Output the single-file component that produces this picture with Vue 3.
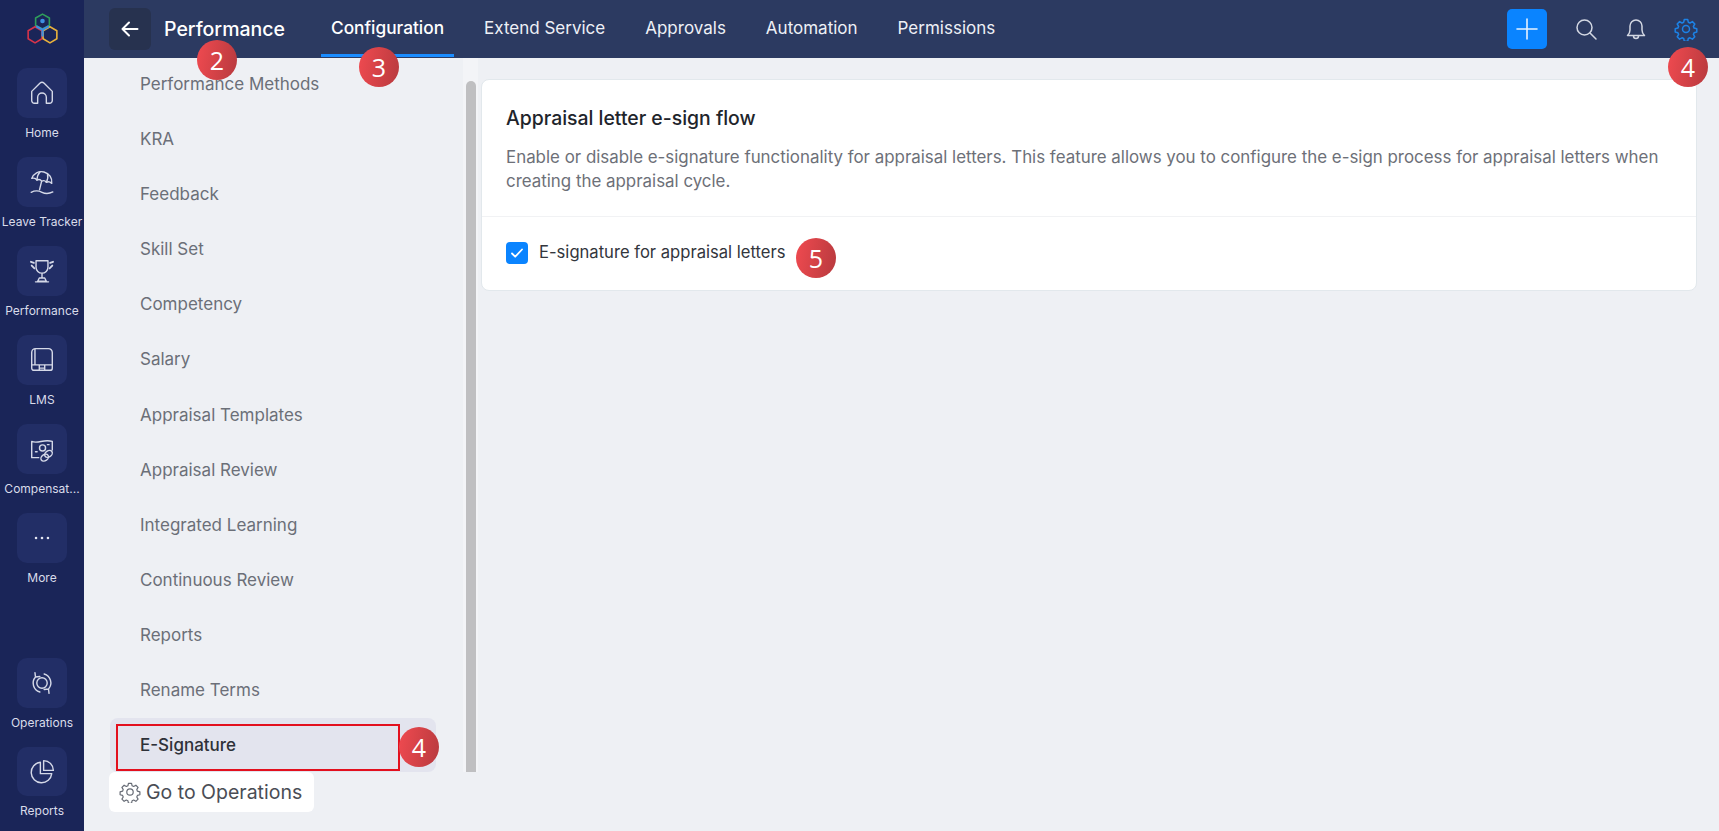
<script setup>
const railTop = [
  { label: 'Home', icon: 'home' },
  { label: 'Leave Tracker', icon: 'leave' },
  { label: 'Performance', icon: 'trophy' },
  { label: 'LMS', icon: 'lms' },
  { label: 'Compensat...', icon: 'comp' },
  { label: 'More', icon: 'more' },
]
const railBottom = [
  { label: 'Operations', icon: 'ops' },
  { label: 'Reports', icon: 'reports' },
]
const tabs = ['Configuration', 'Extend Service', 'Approvals', 'Automation', 'Permissions']
const menu = ['Performance Methods', 'KRA', 'Feedback', 'Skill Set', 'Competency', 'Salary', 'Appraisal Templates', 'Appraisal Review', 'Integrated Learning', 'Continuous Review', 'Reports', 'Rename Terms']
const gear = 'M10.300 2.500h3.400l.6 2.700 1.700.8 2.400-1.400 2.400 2.400-1.400 2.400.7 1.700 2.700.7v3.200l-2.700.7-.7 1.700 1.400 2.400-2.400 2.400-2.400-1.400-1.700.7-.6 2.800h-3.400l-.6-2.800-1.700-.7-2.400 1.400-2.400-2.400 1.400-2.400-.7-1.700-2.700-.7v-3.200l2.700-.7.7-1.700-1.400-2.400 2.400-2.400 2.400 1.400 1.700-.8z'
</script>

<template>
  <div class="page">
    <aside class="rail">
      <div class="logo">
        <svg width="31" height="31" viewBox="2.500 1 27 27" fill="none" stroke-width="1.400" stroke-linejoin="round">
          <path d="M16 2l6 3.400v6.400L16 15l-6-3.200V5.400z" stroke="#2f9e5b" />
          <path d="M9.500 13l6 3.400v7L9.500 27l-6-3.600v-7z" stroke="#d8344a" />
          <path d="M22.500 13l6 3.400v7l-6 3.600-6-3.600v-7z" stroke="#e9b23c" />
          <circle cx="16" cy="8" r="2" fill="#3d8fe0" stroke="none" />
          <path d="M10.500 12.500l5.500 3 5.500-3M16 15.500v6" stroke="#3d8fe0" stroke-width="2" />
        </svg>
      </div>
      <div v-for="item in railTop" :key="item.label" class="rail-item">
        <div class="rail-btn">
          <svg width="26" height="26" viewBox="0 0 24 24" fill="none" stroke="#d5d9e8" stroke-width="1.300" stroke-linecap="round" stroke-linejoin="round">
            <template v-if="item.icon === 'home'">
              <path d="M2.500 10.500L10 3a3 3 0 0 1 4 0l7.500 7.500V19a2.500 2.500 0 0 1-2.500 2.500h-3V16a4 4 0 0 0-8 0v5.500H5A2.500 2.500 0 0 1 2.500 19z" />
            </template>
            <template v-else-if="item.icon === 'leave'">
              <g transform="rotate(14 12 10)">
                <path d="M2.500 11C3 6 7 2.500 12 2.500S21 6 21.500 11c-1.800-1-3.700-1-5 .3-1.400-1.300-3.100-1.300-4.500 0-1.400-1.300-3.100-1.300-4.500 0-1.300-1.300-3.200-1.300-5-.3z" />
                <path d="M8.500 3.200C7.200 5.500 7 8.500 7.500 11.300M15.500 3.200c1.300 2.300 1.500 5.300 1 8.100M12 11.300v8" />
              </g>
              <path d="M2 21.500c3.500-1.800 6.500-1.800 10 0s6.500 1.500 10-.3" />
            </template>
            <template v-else-if="item.icon === 'trophy'">
              <path d="M6.500 2.500h11V8.500a5.500 5.500 0 0 1-11 0zM12 14v4.500M9.500 18.500h5l1.500 3H8zM6 22h12" />
              <path d="M1.800 3.500l2.700 1M2.500 7l2.500 2.500M22.200 3.500l-2.700 1M21.500 7L19 9.500" stroke-width="1.700" />
            </template>
            <template v-else-if="item.icon === 'lms'">
              <path d="M6 1.500h12A3.500 3.500 0 0 1 21.500 5v14.500a2 2 0 0 1-2 2H4.500a2 2 0 0 1-2-2V5A3.500 3.500 0 0 1 6 1.500zM2.500 16.500h19M5.500 2v14.500M9.500 16.500v5M14.500 16.500v5M9.500 19.500h5" />
            </template>
            <template v-else-if="item.icon === 'comp'">
              <path d="M9 20H2.500V5c6 2.500 11-2.500 19 0v8" />
              <path d="M6 14.500h1.500M17 8h1.500" />
              <circle cx="12.500" cy="11" r="2.800" />
              <ellipse cx="18" cy="16.500" rx="3.800" ry="2.800" transform="rotate(-35 18 16.500)" />
              <ellipse cx="14.500" cy="20" rx="3.800" ry="2.800" transform="rotate(-35 14.500 20)" />
            </template>
            <template v-else>
              <circle cx="6.500" cy="12" r="1.200" fill="#e4e7f2" stroke="none" />
              <circle cx="12" cy="12" r="1.200" fill="#e4e7f2" stroke="none" />
              <circle cx="17.500" cy="12" r="1.200" fill="#e4e7f2" stroke="none" />
            </template>
          </svg>
        </div>
        <div class="rail-label">{{ item.label }}</div>
      </div>
      <div class="rail-bottom">
        <div v-for="item in railBottom" :key="item.label" class="rail-item">
          <div class="rail-btn">
            <svg width="26" height="26" viewBox="0 0 24 24" fill="none" stroke="#d5d9e8" stroke-width="1.300" stroke-linecap="round" stroke-linejoin="round">
              <template v-if="item.icon === 'ops'">
                <circle cx="12" cy="12" r="4.800" />
                <path d="M6 6.500A8.500 8.500 0 0 0 10 20.300M5.500 2.500L6 6.500l4-.5" />
                <path d="M18 17.500A8.500 8.500 0 0 0 14 3.700M18.500 21.500L18 17.500l-4 .5" />
              </template>
              <template v-else>
                <path d="M10.500 3A9.500 9.500 0 1 0 21 13.500H10.500z" />
                <path d="M13.500 1.500a9 9 0 0 1 9 9h-9z" />
              </template>
            </svg>
          </div>
          <div class="rail-label">{{ item.label }}</div>
        </div>
      </div>
    </aside>

    <div class="content">
      <header class="topbar">
        <button class="back">
          <svg width="22" height="22" viewBox="0 0 22 22" fill="none" stroke="#fff" stroke-width="2" stroke-linecap="round" stroke-linejoin="round">
            <path d="M18.500 11h-15M10 4.500L3.500 11l6.500 6.500" />
          </svg>
        </button>
        <div class="module">Performance</div>
        <nav class="tabs">
          <div v-for="(t, i) in tabs" :key="t" class="tab" :class="{ on: i === 0 }">{{ t }}</div>
        </nav>
        <div class="actions">
          <div class="plus">
            <svg width="24" height="24" viewBox="0 0 24 24" stroke="#e8f2ff" stroke-width="1.600" stroke-linecap="round">
              <path d="M12 2v20M2 12h20" />
            </svg>
          </div>
          <svg class="act" width="24" height="24" viewBox="0 0 24 24" fill="none" stroke="#d3d7e2" stroke-width="1.500" stroke-linecap="round">
            <circle cx="10.500" cy="10.500" r="7.500" /><path d="M16 16l6 6" />
          </svg>
          <svg class="act" width="24" height="24" viewBox="0 0 24 24" fill="none" stroke="#d3d7e2" stroke-width="1.500" stroke-linejoin="round" stroke-linecap="round">
            <path d="M3.500 18.500c1.500-1.500 2.500-3 2.500-5.500V9a6 6 0 0 1 12 0v4c0 2.500 1 4 2.500 5.500zM9.500 19a2.500 2.500 0 0 0 5 0" />
          </svg>
          <svg class="act" width="24" height="24" viewBox="0 0 24 24" fill="none" stroke="#1c82e6" stroke-width="1.500" stroke-linejoin="round">
            <path :d="gear" /><circle cx="12" cy="12" r="3.500" />
          </svg>
        </div>
      </header>

      <div class="body">
        <div class="side">
          <div class="side-col">
            <ul class="menu">
              <li v-for="m in menu" :key="m" class="menu-item">{{ m }}</li>
              <li class="menu-item active">
                E-Signature
                <span class="redbox"></span>
              </li>
            </ul>
            <button class="goto">
              <svg width="22" height="22" viewBox="0 0 24 24" fill="none" stroke="#666b75" stroke-width="1.300" stroke-linejoin="round">
                <path :d="gear" /><circle cx="12" cy="12" r="3.500" />
              </svg>
              Go to Operations
            </button>
          </div>
          <div class="gutter"><div class="thumb"></div></div>
        </div>

        <main class="main">
          <section class="card">
            <div class="card-head">
              <h2>Appraisal letter e-sign flow</h2>
              <p>Enable or disable e-signature functionality for appraisal letters. This feature allows you to configure the e-sign process for appraisal letters when creating the appraisal cycle.</p>
            </div>
            <div class="card-row">
              <span class="check">
                <svg width="14" height="14" viewBox="0 0 14 14" fill="none" stroke="#fff" stroke-width="1.800" stroke-linecap="round" stroke-linejoin="round">
                  <path d="M2 7.500l3.200 3.200L12 3.500" />
                </svg>
              </span>
              <span class="check-label">E-signature for appraisal letters</span>
            </div>
          </section>
        </main>
      </div>
    </div>

    <span class="badge b2">2</span>
    <span class="badge b3">3</span>
    <span class="badge b4a">4</span>
    <span class="badge b4b">4</span>
    <span class="badge b5">5</span>
  </div>
</template>

<style>
html, body { margin: 0; overflow: hidden; }
</style>

<style scoped>
.page {
  position: relative;
  display: flex;
  width: 1719px;
  height: 831px;
  overflow: hidden;
  background: #eef0f4;
  font-family: Inter, "Liberation Sans", sans-serif;
}
.rail {
  width: 84px;
  flex: none;
  height: 831px;
  box-sizing: border-box;
  padding-bottom: 12px;
  background: #1a2558;
  display: flex;
  flex-direction: column;
}
.logo {
  height: 68px;
  flex: none;
  display: flex;
  justify-content: center;
  padding-top: 13px;
  box-sizing: border-box;
}
.rail-item {
  height: 89px;
  flex: none;
  display: flex;
  flex-direction: column;
  align-items: center;
}
.rail-bottom { margin-top: auto; }
.rail-bottom .rail-item:last-child { height: 72px; }
.rail-btn {
  width: 50px;
  height: 50px;
  border-radius: 10px;
  background: #222e66;
  display: flex;
  align-items: center;
  justify-content: center;
}
.rail-label {
  margin-top: 7px;
  font-size: 12px;
  line-height: 16px;
  color: #d9dcea;
  white-space: nowrap;
}
.content { flex: 1; display: flex; flex-direction: column; min-width: 0; }
.topbar {
  height: 58px;
  flex: none;
  background: #2c3a61;
  display: flex;
  align-items: center;
  padding-left: 25px;
  box-sizing: border-box;
}
.back {
  width: 42px;
  height: 42px;
  border: 0;
  padding: 0;
  border-radius: 6px;
  background: #27324f;
  display: flex;
  align-items: center;
  justify-content: center;
}
.module {
  margin-left: 13px;
  width: 157px;
  flex: none;
  color: #fff;
  font-size: 19.500px;
  font-weight: 500;
}
.tabs { display: flex; height: 58px; }
.tab {
  position: relative;
  padding: 0 10px;
  margin-right: 20px;
  line-height: 56px;
  color: #eef0f6;
  font-size: 17px;
  white-space: nowrap;
}
.tab.on { font-weight: 500; color: #fff; font-size: 17.300px; }
.tab.on::after {
  content: "";
  position: absolute;
  left: 0;
  right: 0;
  bottom: 1px;
  height: 3px;
  background: #1a8cff;
}
.actions {
  margin-left: auto;
  display: flex;
  align-items: center;
  padding-right: 21px;
  gap: 26px;
}
.plus {
  width: 40px;
  height: 40px;
  border-radius: 5px;
  background: #0a84ff;
  display: flex;
  align-items: center;
  justify-content: center;
  margin-right: 1px;
}
.act { flex: none; }
.body { flex: 1; display: flex; min-height: 0; }
.side { width: 394px; flex: none; display: flex; }
.side-col { width: 379px; flex: none; padding-left: 26px; box-sizing: border-box; }
.menu {
  list-style: none;
  margin: -1px 0 0;
  padding: 0;
  width: 326px;
}
.menu-item {
  position: relative;
  height: 55.100px;
  line-height: 55px;
  padding-left: 30px;
  box-sizing: border-box;
  font-size: 17px;
  color: #6b6f78;
}
.menu-item.active {
  height: 54px;
  line-height: 54px;
  background: #e3e4ee;
  border-radius: 8px;
  color: #2e3138;
  font-weight: 500;
}
.redbox {
  position: absolute;
  left: 6px;
  top: 6px;
  width: 284px;
  height: 47px;
  box-sizing: border-box;
  border: 2px solid #e3101e;
}
.goto {
  display: flex;
  align-items: center;
  gap: 5px;
  width: 205px;
  height: 40px;
  margin-left: -1px;
  padding: 0 0 0 10px;
  box-sizing: border-box;
  border: 0;
  border-radius: 6px;
  background: #fff;
  font: 400 19.500px Inter, "Liberation Sans", sans-serif;
  color: #4a4d55;
  white-space: nowrap;
}
.gutter {
  width: 15px;
  height: 714px;
  background: #f3f4f7;
  padding: 23px 2px 0 3px;
  box-sizing: border-box;
}
.thumb {
  width: 10px;
  height: 100%;
  background: #bfbfc1;
  border-radius: 5px 5px 0 0;
}
.main { flex: 1; padding: 21px 22px 0 3px; min-width: 0; }
.card {
  background: #fff;
  border: 1px solid #e2e8ec;
  border-radius: 8px;
  box-sizing: border-box;
  height: 212px;
}
.card-head {
  height: 137px;
  padding: 26px 24px 0;
  box-sizing: border-box;
  border-bottom: 1px solid #f1f2f4;
}
h2 {
  margin: 0;
  font-size: 19.400px;
  font-weight: 500;
  line-height: 25px;
  color: #21242b;
}
p {
  margin: 14px 0 0;
  font-size: 16.900px;
  line-height: 24px;
  color: #6d7078;
}
.card-row {
  display: flex;
  align-items: center;
  padding: 25px 24px 0;
  gap: 11px;
}
.check {
  width: 22px;
  height: 22px;
  flex: none;
  border-radius: 4px;
  background: #0a84ff;
  display: flex;
  align-items: center;
  justify-content: center;
}
.check-label { font-size: 16.600px; color: #33363d; font-weight: 400; margin-top: -2px; }
.badge {
  position: absolute;
  width: 40px;
  height: 40px;
  border-radius: 50%;
  background: linear-gradient(100deg, #f04a50, #b83a3e);
  color: #fff;
  font: 400 25px/40px "Open Sans", "Liberation Sans", sans-serif;
  text-align: center;
}
.b2 { left: 197px; top: 40px; }
.b3 { left: 359px; top: 47px; }
.b4a { left: 1668px; top: 47px; }
.b4b { left: 399px; top: 727px; }
.b5 { left: 796px; top: 238px; }
</style>
